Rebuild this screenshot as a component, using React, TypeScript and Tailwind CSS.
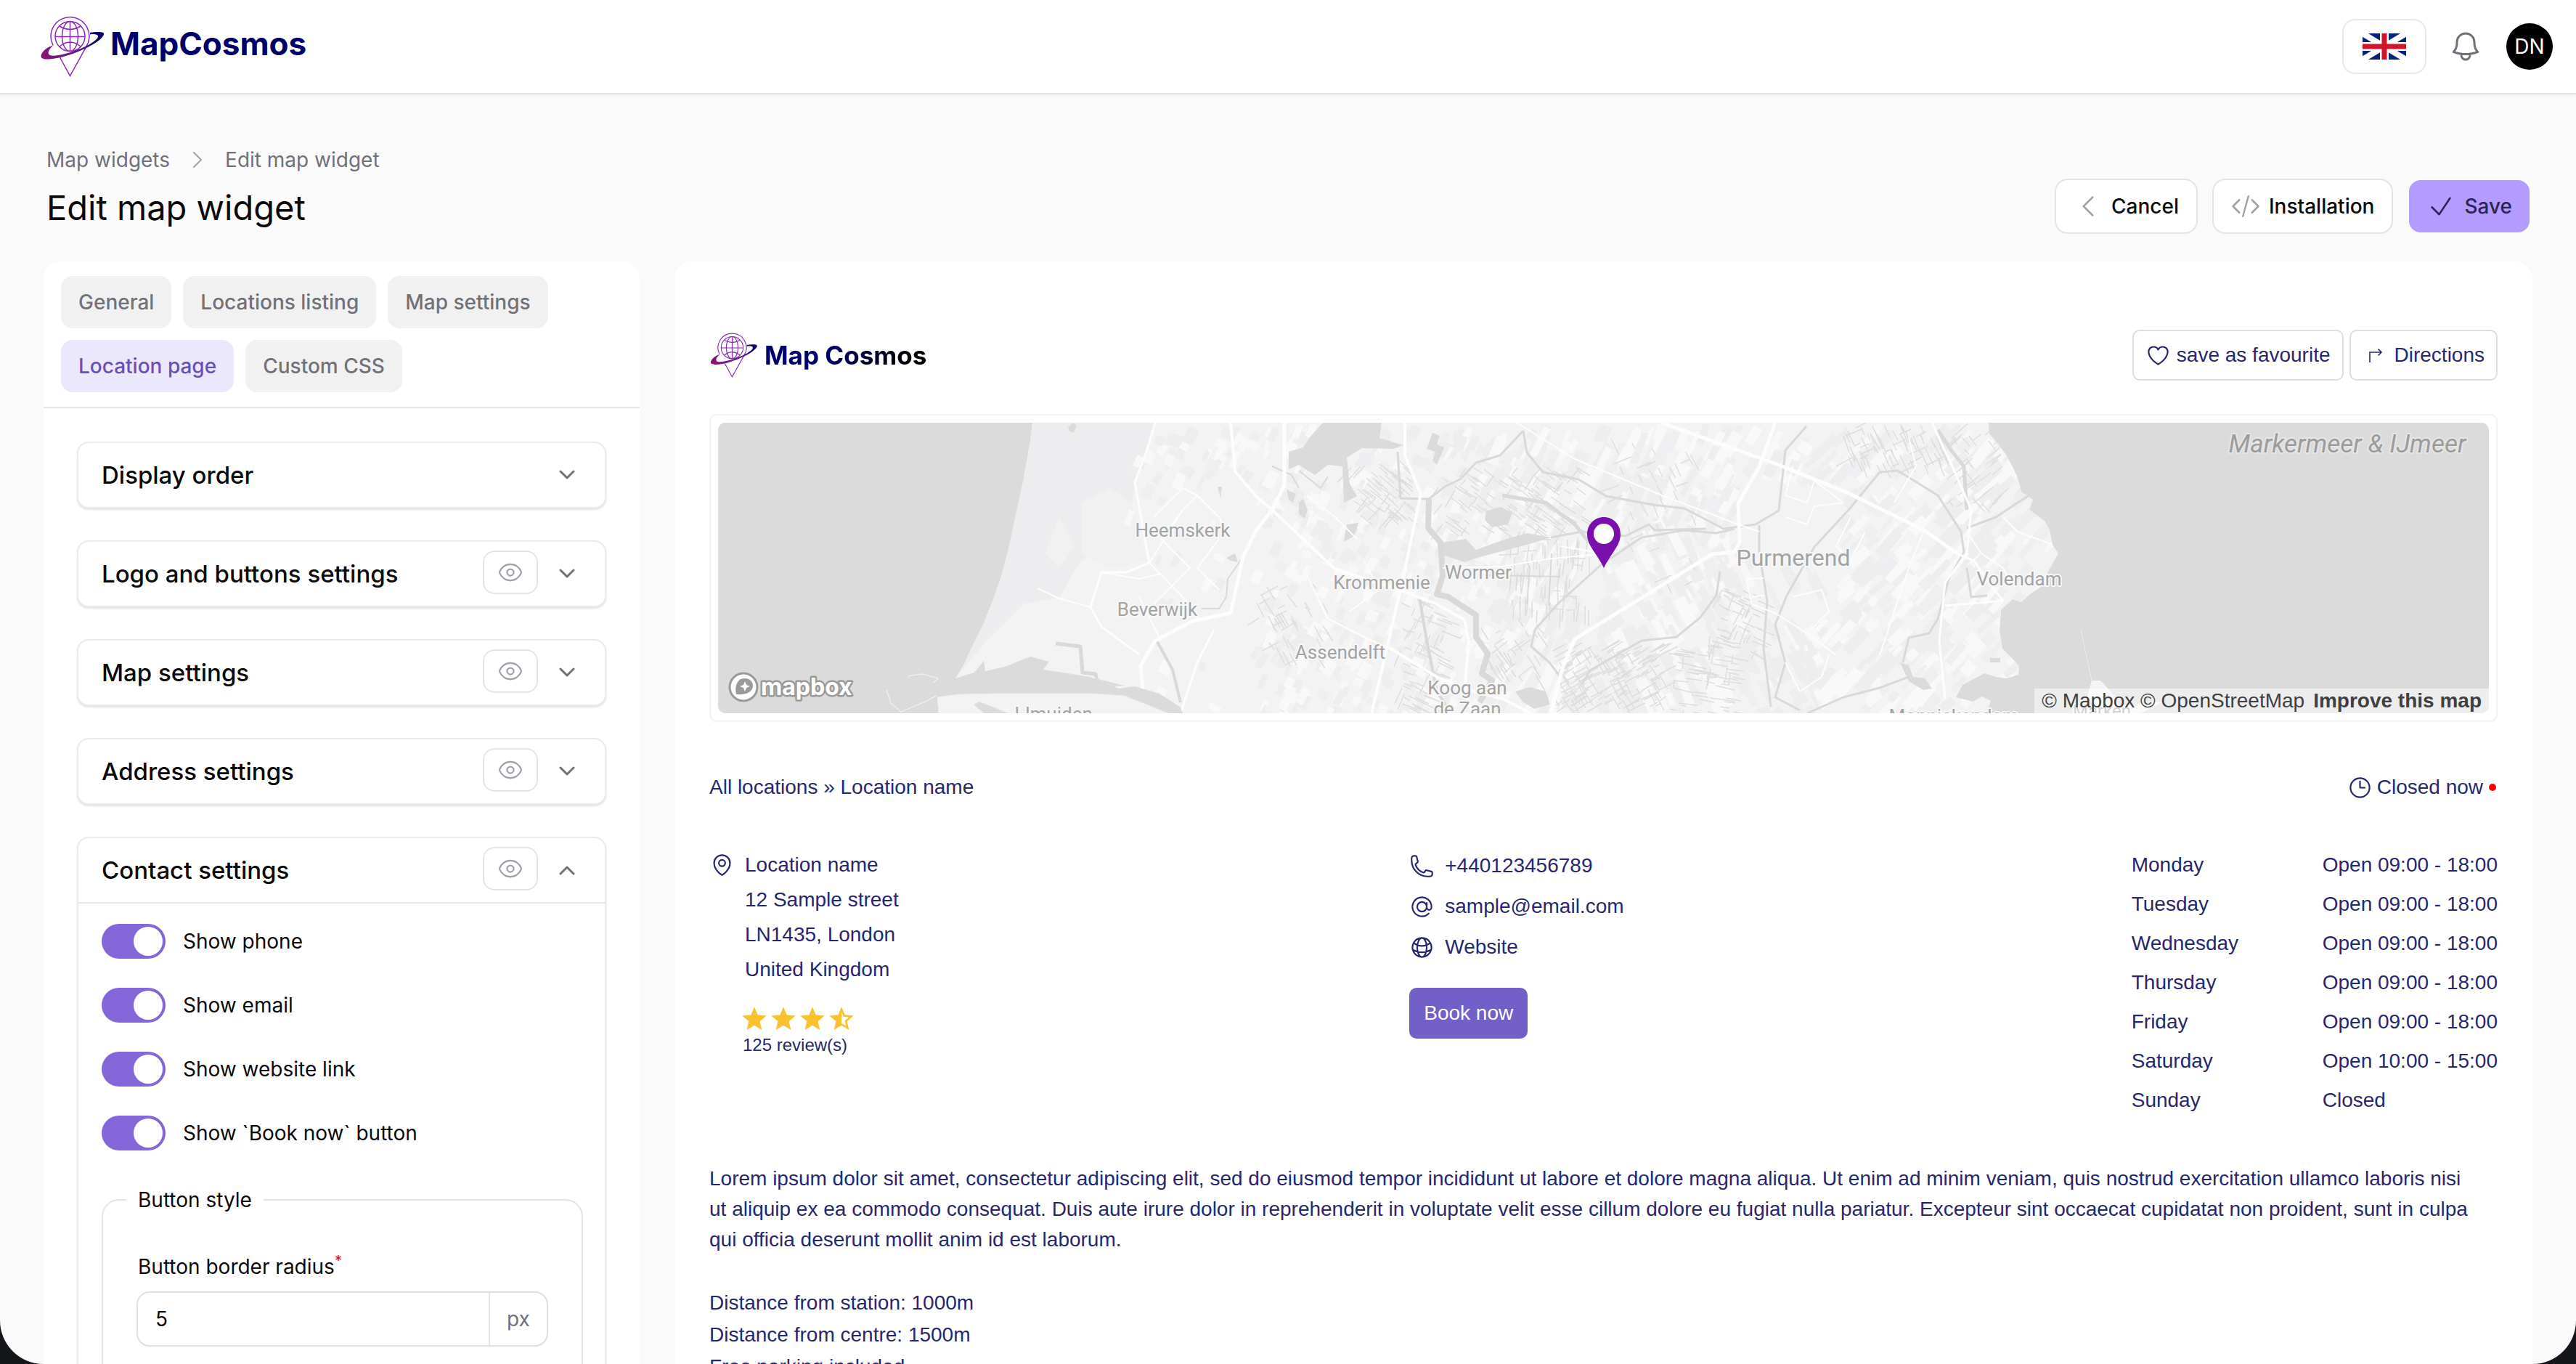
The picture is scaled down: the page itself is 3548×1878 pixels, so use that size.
import { useState } from "react";
import type { ReactNode } from "react";
import {
  HiOutlineAtSymbol,
  HiOutlineBell,
  HiOutlineCheck,
  HiOutlineChevronLeft,
  HiOutlineChevronRight,
  HiOutlineClock,
  HiOutlineCodeBracket,
  HiOutlineEye,
  HiOutlineGlobeAlt,
  HiOutlineHeart,
  HiOutlineMapPin,
  HiOutlinePhone,
} from "react-icons/hi2";

function CosmosMark({ className, id }: { className: string; id: string }) {
  return (
    <svg viewBox="0 0 88 84" className={className} fill="none" aria-hidden="true">
      <defs>
        <linearGradient id={id} x1="0" y1="50" x2="88" y2="22" gradientUnits="userSpaceOnUse">
          <stop offset="0" stopColor="#8a1572" />
          <stop offset="0.35" stopColor="#6d1c8c" />
          <stop offset="0.65" stopColor="#4a1080" />
          <stop offset="0.8" stopColor="#0a0768" />
        </linearGradient>
      </defs>
      <g stroke="#8b25bd" strokeWidth="1.5">
        <path d="M26.500 57 40.500 82.500 63 42A26.500 26.500 0 1 0 17 40.300" />
        <circle cx="40.500" cy="28" r="20.500" />
        <ellipse cx="40.500" cy="28" rx="11" ry="20.500" />
        <path d="M40.500 7.500v41M20 28.500h41M26 14q14.500 9 29 0M26 42q14.500-12 29 0" />
      </g>
      <path
        fill={`url(#${id})`}
        d="M68 23c8-1.500 18-1.500 19 1 1 4-8 12-22 19C45 53 25 59 11 59.500 3 60 .500 58 .500 55 1 50 8 43 17 40.500c-6 6-8 10-5 13 4 3 22 0 44-9 14-6 24-13 23-17-.5-2-5-3-11-2Z"
      />
    </svg>
  );
}

function FlagUK() {
  return (
    <svg viewBox="0 0 60 36" className="h-9 w-15" aria-hidden="true">
      <rect width="60" height="36" fill="#00247d" />
      <path d="M0 0 60 36M60 0 0 36" stroke="#fff" strokeWidth="8" />
      <path d="M30 0v36M0 18h60" stroke="#fff" strokeWidth="12" />
      <path d="M30 0v36M0 18h60" stroke="#cf142b" strokeWidth="7" />
    </svg>
  );
}

function Chevron({ up }: { up?: boolean }) {
  return (
    <svg viewBox="0 0 24 14" className="h-3.5 w-6" fill="none" stroke="#71717a" strokeWidth="3" strokeLinecap="round" strokeLinejoin="round" aria-hidden="true">
      <path d={up ? "M3 12 12 3l9 9" : "m3 2 9 9 9-9"} />
    </svg>
  );
}

function TurnArrow() {
  return (
    <svg viewBox="0 0 20 20" className="h-5 w-5" fill="none" stroke="#27276f" strokeWidth="1.6" aria-hidden="true">
      <path d="M2 20V6h16M13.500 1.500 18 6l-4.500 4.500" />
    </svg>
  );
}

function Star({ half }: { half?: boolean }) {
  return (
    <svg viewBox="0 0 24 24" className="h-10 w-10" fill="#fbc02d" aria-hidden="true">
      {half ? (
        <path d="m22 9.240-7.190-.62L12 2 9.190 8.630 2 9.240l5.460 4.730L5.820 21 12 17.270 18.180 21l-1.630-7.030L22 9.240ZM12 15.400V6.100l1.710 4.040 4.380.38-3.320 2.880 1 4.280L12 15.400Z" />
      ) : (
        <path d="M12 17.270 18.180 21l-1.640-7.030L22 9.240l-7.190-.61L12 2 9.190 8.630 2 9.240l5.460 4.730L5.820 21 12 17.270Z" />
      )}
    </svg>
  );
}

/* ---------- map ---------- */

const LAND =
  "M433 0 430 24 426 48 420 82 413 113 406 146 399 178 390 212 379 243 366 276 350 308 338 334 327 352 353 344 366 328 368 342 395 336 430 322 456 329 448 340 470 344 520 352 552 366 574 363 608 373 637 392 640 400 1747 400 1753 383 1741 377 1728 384 1705 378 1714 361 1744 345 1760 350 1774 352 1791 347 1792 335 1780 322 1769 311 1765 285 1767 258 1783 243 1795 247 1808 235 1823 225 1832 205 1846 180 1838 168 1834 148 1827 135 1806 120 1811 106 1795 95 1790 76 1783 61 1775 46 1762 28 1751 15 1750 0Z";
const SOUTH = "M302 378 330 374 380 373 516 373 560 376 590 388 620 400 400 400 360 384 352 388 366 400 304 400Z";

const WATER_AREAS = [
  "M833 0H914L911 21 944 31 930 36 887 35 866 48 870 84 880 101 862 110 860 60 840 58 822 72 800 58 786 64 786 40 806 34 815 20Z",
  "M998 165 1030 160 1044 175 1080 162 1114 152 1147 158 1114 168 1049 185 1028 192 998 182Z",
  "M1058 122 1078 116 1094 124 1088 140 1066 144 1056 134Z",
  "M783 92 796 98 792 110 786 106Z",
  "M800 110 806 104 812 120 808 132 800 126Z",
  "M866 140 882 138 876 156 862 164Z",
  "M984 14 994 18 990 30 1000 34 990 58 984 52 988 40 976 36Z",
  "M1098 370 1118 364 1140 370 1146 388 1124 394 1108 384Z",
  "M688 88 694 88 692 104Z",
  "M482 6 489 0 494 4 490 14 484 12Z",
  "M700 186 712 180 716 192 706 190Z",
  "M1628 330 1640 334 1646 350 1662 352 1672 366 1660 368 1640 356Z",
  "M1752 324h14v6h-14z",
];

const CANALS = [
  { d: "M979 105 978 145 995 165 998 211 990 236 1006 240 1044 265 1044 295 1060 318 1052 345 1066 355 1049 385", w: 8 },
  { d: "M1109 11 1114 41 1136 68 1185 78 1223 101 1288 113 1331 118 1385 146 1429 140 1461 121 1470 38 1499 5", w: 3 },
  { d: "M1109 11 1077 45 1044 55 1022 78 1001 88 979 105 940 104 936 40", w: 3 },
  { d: "M1125 285 1158 248 1217 195 1272 158 1331 148 1375 152 1400 146", w: 3 },
  { d: "M1434 141 1434 178 1445 245 1440 311 1450 391", w: 3 },
  { d: "M1600 68 1559 118 1510 171 1472 238 1456 278 1470 331 1456 378 1490 396", w: 3 },
  { d: "M1380 205 1375 238 1353 268 1320 295 1272 300 1201 341 1190 360", w: 3 },
  { d: "M1600 68 1625 66 1680 100 1712 150 1716 178 1695 215 1680 270 1668 290 1640 296 1632 330", w: 3 },
  { d: "M1640 350 1600 365 1550 378 1500 400", w: 3 },
  { d: "M1125 285 1120 308 1145 330 1160 350", w: 3 },
  { d: "M966 240 976 300 990 370 1010 400", w: 4 },
  { d: "M1147 158 1190 150 1250 156 1282 140 1290 148 1360 146", w: 3 },
  { d: "M1080 100 1140 110 1180 140 1200 165", w: 5 },
  { d: "M1114 250 1118 200 1114 190M1144 252 1148 180M1060 210 1160 212", w: 2 },
  { d: "M465 304 499 308 502 344 520 346 522 358", w: 5 },
  { d: "M604 300 626 340 637 385", w: 4 },
  { d: "M723 185 702 215 700 240 690 256 666 256", w: 2 },
  { d: "M763 60 790 72 800 90M800 66 830 90 840 74", w: 2 },
  { d: "M1680 10 1700 40 1716 60 1720 120", w: 5 },
  { d: "M1720 145 1760 130 1790 110 1806 100", w: 3 },
  { d: "M1720 200 1726 240 1748 238", w: 3 },
];

const ROADS = [
  { d: "M1299 0 1461 58 1559 98 1661 148 1708 181", w: 5 },
  { d: "M1456 0 1434 61 1405 111 1407 165 1400 178 1369 181 1290 230 1180 298 1163 338 1147 400", w: 5 },
  { d: "M706 0 712 67 740 100 763 120 811 165 849 201 941 231 990 250 1028 271 1034 300 1028 371 1040 400", w: 4 },
  { d: "M780 0 780 86 763 120 740 150 723 185 706 262 654 273 602 300 582 335 588 400", w: 5 },
  { d: "M602 0 590 40 574 82 594 193 562 206 528 206 513 254 528 281 580 319", w: 3 },
  { d: "M946 0 946 45 968 98 944 211 925 295 900 400", w: 4 },
  { d: "M683 285 660 330 637 400", w: 3 },
  { d: "M925 310 990 350 1040 370 1080 380 1120 400", w: 4 },
  { d: "M1672 0 1700 60 1726 120 1720 180 1690 220 1682 300 1690 380", w: 3 },
  { d: "M1708 181 1730 190 1750 220 1770 245 1690 252", w: 3 },
  { d: "M1720 150 1740 180 1770 200 1780 220M1770 130 1790 150 1838 168", w: 2 },
  { d: "M1100 0 1180 50 1300 100 1405 140 1434 150", w: 2 },
  { d: "M440 228 470 242 513 254M528 206 580 215 610 208M594 193 640 120 660 100 690 130 700 150", w: 2 },
  { d: "M594 193 640 240 662 270M640 120 610 160 650 200 600 250M660 100 640 90 600 130M580 240 610 300M690 160 660 200 690 230", w: 2 },
  { d: "M1416 215 1424 250 1456 262 1500 290 1540 320M1416 215 1440 214M1424 240 1440 238", w: 2 },
  { d: "M1480 60 1470 100 1500 110 1510 80 1550 110 1510 115 1500 140 1470 130M1560 130 1540 170 1560 190 1580 150", w: 2 },
  { d: "M1480 240 1520 230 1530 260 1500 290M1470 330 1490 370 1520 350 1530 320", w: 2 },
  { d: "M811 210 840 270 900 300 925 310M870 260 910 230 890 190M811 100 850 130 880 160", w: 2 },
  { d: "M373 373 400 360 520 352M400 382 460 378 600 396M1160 170 1220 180M998 200 1080 198 1140 188 1220 180", w: 2 },
  { d: "M1661 148 1640 200 1620 260 1600 320M1640 20 1650 60 1620 110", w: 2 },
];

function makeRandom(seed: number) {
  let s = seed;
  return () => {
    s = (s * 16807) % 2147483647;
    return s / 2147483647;
  };
}

const FIELDS = (() => {
  const rnd = makeRandom(4711);
  const tones = ["#f9f9f9", "#f8f8f9", "#efeff2", "#eeeef1", "#eeeeef"];
  return Array.from({ length: 1500 }, (_, key) => {
    const x = 560 + rnd() * 1290;
    const y = rnd() * 400;
    const inTown = (x < 740 && y > 70) || (x > 1400 && x < 1560 && y > 60 && y < 270);
    const long = x > 1060;
    return {
      key,
      x: Math.round(x),
      y: Math.round(y),
      w: Math.round(5 + rnd() * 12),
      h: Math.round((long ? 14 : 8) + rnd() * (long ? 34 : 16)),
      angle: Math.round((x > 1500 ? 38 : x > 1200 && y > 130 ? -32 : 20) + rnd() * 12),
      tone: tones[Math.floor(rnd() * tones.length)],
      hidden: inTown && rnd() > 0.12,
    };
  }).filter((f) => !f.hidden);
})();

const DITCH_ZONES = [
  { x: 990, y: 60, w: 200, h: 90, n: 120, a: 30 },
  { x: 1090, y: 150, w: 110, h: 110, n: 80, a: 88 },
  { x: 1150, y: 310, w: 150, h: 90, n: 170, a: -35 },
  { x: 940, y: 240, w: 60, h: 160, n: 70, a: 20 },
  { x: 870, y: 50, w: 80, h: 80, n: 60, a: 35 },
  { x: 1310, y: 290, w: 90, h: 110, n: 70, a: 5 },
  { x: 1375, y: 225, w: 60, h: 90, n: 50, a: 20 },
  { x: 1550, y: 0, w: 150, h: 60, n: 80, a: 60 },
  { x: 1225, y: 20, w: 120, h: 220, n: 40, a: 60 },
  { x: 1050, y: 270, w: 80, h: 80, n: 34, a: 50 },
  { x: 740, y: 220, w: 100, h: 110, n: 40, a: 55 },
  { x: 1690, y: 10, w: 70, h: 110, n: 40, a: -45 },
];

const DITCHES = (() => {
  const rnd = makeRandom(90210);
  return DITCH_ZONES.map((z) => {
    let d = "";
    for (let i = 0; i < z.n; i++) {
      const x = z.x + rnd() * z.w;
      const y = z.y + rnd() * z.h;
      const turn = rnd() > 0.75 ? 90 : 0;
      const a = ((z.a + turn + rnd() * 10) * Math.PI) / 180;
      const len = 8 + rnd() * 20;
      d += `M${x.toFixed(0)} ${y.toFixed(0)}l${(Math.cos(a) * len).toFixed(0)} ${(Math.sin(a) * len).toFixed(0)}`;
    }
    return d;
  });
})();

const PLACES = [
  { name: "Heemskerk", x: 640, y: 157, size: 26 },
  { name: "Beverwijk", x: 605, y: 266, size: 26 },
  { name: "Krommenie", x: 914, y: 229, size: 26 },
  { name: "Wormer", x: 1047, y: 215, size: 26 },
  { name: "Assendelft", x: 857, y: 325, size: 26 },
  { name: "Koog aan", x: 1032, y: 374, size: 26 },
  { name: "de Zaan", x: 1032, y: 403, size: 26 },
  { name: "Purmerend", x: 1481, y: 197, size: 32 },
  { name: "Volendam", x: 1792, y: 224, size: 26 },
  { name: "IJmuiden", x: 462, y: 410, size: 26 },
  { name: "Monnickendam", x: 1702, y: 413, size: 26 },
  { name: "Marken", x: 1906, y: 405, size: 24 },
];

function MapCanvas() {
  return (
    <svg
      viewBox="0 0 2439 400"
      preserveAspectRatio="xMidYMid slice"
      className="block h-[400px] w-full font-['Roboto',sans-serif]"
      role="img"
      aria-label="Map around Purmerend"
    >
      <defs>
        <clipPath id="land-clip">
          <path d={LAND} />
        </clipPath>
      </defs>
      <rect width="2439" height="400" fill="#dbdbdb" />
      <path d={SOUTH} fill="#f3f3f3" stroke="#ececec" />
      <path d={LAND} fill="#f3f3f3" />
      <g clipPath="url(#land-clip)">
        <path d="M433 0H602L574 82 570 110 540 170 500 190 470 240 420 250 370 300 327 352 379 243 413 113Z" fill="#ededf0" />
        <path d="M500 110 540 90 570 110 590 190 540 200 500 180ZM450 180 470 130 490 170 470 200Z" fill="#f1f1f2" />
        {FIELDS.map((f) => (
          <rect key={f.key} x={f.x} y={f.y} width={f.w} height={f.h} fill={f.tone} transform={`rotate(${f.angle} ${f.x} ${f.y})`} />
        ))}
        {DITCHES.map((d, i) => (
          <path key={i} d={d} stroke="#dedede" strokeWidth="1.5" fill="none" />
        ))}
        <g fill="#dbdbdb">
          {WATER_AREAS.map((d) => (
            <path key={d} d={d} />
          ))}
          <path d="M404 346 452 334 448 340 476 344 512 350 560 362 500 366 416 366 360 368Z" />
        </g>
        <g fill="none" strokeLinejoin="round">
          {CANALS.map((c) => (
            <path key={c.d} d={c.d} stroke="#d9d9d9" strokeWidth={c.w} />
          ))}
          {ROADS.map((r) => (
            <path key={r.d} d={r.d} stroke="#fdfdfd" strokeWidth={r.w} />
          ))}
        </g>
      </g>
      <path d="M1877 285 1892 355" stroke="#ececec" strokeWidth="1" />
      <path d="M1892 355 1904 355 1919 371 1930 390 1990 384 1960 400H1900L1886 376Z" fill="#f5f5f5" />
      <g fill="none" stroke="#ededed" strokeWidth="1.500">
        <path d="M262 352 264 348 282 346 303 352 296 358M232 368 238 386 252 398 286 384 300 376" />
      </g>
      <g fill="#a3a3a3" stroke="#f7f7f7" strokeWidth="4" strokeLinejoin="round" paintOrder="stroke" textAnchor="middle">
        {PLACES.map((p) => (
          <text key={p.name} x={p.x} y={p.y} fontSize={p.size}>
            {p.name}
          </text>
        ))}
        <text x="2244" y="41" fontSize="35" fontStyle="italic" fill="#9c9c9c" stroke="#e6e6e6">
          Markermeer &amp; IJmeer
        </text>
      </g>
      <path d="M1220 130c-13 0-23 10-23 24 0 15 14 27 23 46 9-19 23-31 23-46 0-14-10-24-23-24Z" fill="#7a10ac" />
      <circle cx="1220" cy="153" r="14" fill="#fff" />
      <circle cx="35" cy="364" r="19" fill="#fff" stroke="#9a9a9a" strokeWidth="3" />
      <path d="M25 374c-2-10 0-22 12-22 7 0 11 5 11 10 0 8-8 13-23 12Z" fill="#9a9a9a" />
      <path d="m37 356 2 5 5 2-5 2-2 5-2-5-5-2 5-2Z" fill="#fff" />
      <text x="59" y="375" fontSize="32" fontWeight="700" fill="#fff" stroke="#9a9a9a" strokeWidth="5" strokeLinejoin="round" paintOrder="stroke" className="font-['Inter',sans-serif]">
        mapbox
      </text>
    </svg>
  );
}

/* ---------- sidebar ---------- */

const TABS = ["General", "Locations listing", "Map settings", "Location page", "Custom CSS"];

function SettingsCard({ title, eye, open, children }: { title: string; eye?: boolean; open?: boolean; children?: ReactNode }) {
  return (
    <section className="rounded-2xl border-2 border-[#ebebec] bg-white shadow-[0_2px_3px_rgba(0,0,0,0.12)]">
      <div className={open ? "flex h-[90px] items-center border-b-2 border-[#e4e4e7] px-8" : "flex h-[88px] items-center px-8"}>
        <h2 className="flex-1 text-[33px] leading-10 font-medium text-[#0a0a0b]">{title}</h2>
        {eye && (
          <button type="button" aria-label={`Toggle visibility of ${title}`} className="mr-5 mb-1 flex h-15 w-19 items-center justify-center rounded-2xl border-2 border-[#e4e4e7] text-[#a1a1aa]">
            <HiOutlineEye className="h-9 w-9" />
          </button>
        )}
        <button type="button" aria-label={`${open ? "Collapse" : "Expand"} ${title}`} aria-expanded={!!open} className="flex h-10 w-10 items-center justify-center">
          <Chevron up={open} />
        </button>
      </div>
      {children}
    </section>
  );
}

function Toggle({ label }: { label: string }) {
  const [on, setOn] = useState(true);
  return (
    <label className="flex h-12 items-center gap-6 text-[28px] leading-10 text-[#0a0a0b]">
      <input
        type="checkbox"
        checked={on}
        onChange={() => setOn(!on)}
        className="flex h-12 w-[88px] appearance-none items-center rounded-full bg-zinc-300 p-1 before:h-10 before:w-10 before:rounded-full before:bg-white checked:justify-end checked:bg-[#8566d9]"
      />
      {label}
    </label>
  );
}

function Sidebar() {
  const [tab, setTab] = useState("Location page");
  return (
    <aside className="w-[821px] shrink-0 self-stretch overflow-hidden rounded-t-3xl bg-white">
      <nav className="flex flex-wrap gap-4 border-b-2 border-[#e4e4e7] px-6 py-5 text-[28px] font-medium">
        {TABS.map((t) => (
          <button
            key={t}
            type="button"
            onClick={() => setTab(t)}
            className={t === tab ? "h-18 rounded-2xl bg-[#ebe7fc] px-6 text-[#6b4fb8]" : "h-18 rounded-2xl bg-[#f1f1f1] px-6 text-[#71717a]"}
          >
            {t}
          </button>
        ))}
      </nav>
      <div className="flex flex-col gap-11 px-[46px] pt-[46px]">
        <SettingsCard title="Display order" />
        <SettingsCard title="Logo and buttons settings" eye />
        <SettingsCard title="Map settings" eye />
        <SettingsCard title="Address settings" eye />
        <SettingsCard title="Contact settings" eye open>
          <div className="px-8 pt-7 pb-10">
            <div className="flex flex-col gap-10">
              <Toggle label="Show phone" />
              <Toggle label="Show email" />
              <Toggle label="Show website link" />
              <Toggle label="Show `Book now` button" />
            </div>
            <fieldset className="mt-12 rounded-3xl border-2 border-[#e4e4e7] px-12 pt-13 pb-12 text-[28px] text-[#0a0a0b]">
              <legend className="-ml-4 px-4 leading-10">Button style</legend>
              <label htmlFor="radius" className="flex items-start leading-10">
                Button border radius
                <span className="text-xl leading-6 text-red-600">*</span>
              </label>
              <div className="mt-4 flex h-18 overflow-hidden rounded-2xl shadow-[0_2px_3px_rgba(0,0,0,0.08)] ring-2 ring-[#e0e0e2]">
                <input id="radius" defaultValue="5" className="min-w-0 flex-1 px-6 outline-none" />
                <span className="flex w-20 items-center justify-center border-l-2 border-[#e4e4e7] text-[#71717a]">px</span>
              </div>
            </fieldset>
          </div>
        </SettingsCard>
      </div>
    </aside>
  );
}

/* ---------- preview ---------- */

const HOURS = [
  ["Monday", "Open 09:00 - 18:00"],
  ["Tuesday", "Open 09:00 - 18:00"],
  ["Wednesday", "Open 09:00 - 18:00"],
  ["Thursday", "Open 09:00 - 18:00"],
  ["Friday", "Open 09:00 - 18:00"],
  ["Saturday", "Open 10:00 - 15:00"],
  ["Sunday", "Closed"],
];

function Preview() {
  return (
    <section className="min-w-0 flex-1 self-stretch rounded-t-3xl bg-white px-12 pt-[94px] font-['Liberation_Sans',Arial,sans-serif] text-[28px] text-[#27276f]">
      <div className="flex items-center justify-between">
        <div className="flex items-center gap-2">
          <CosmosMark id="ring-preview" className="h-[62px] w-[68px]" />
          <span className="bg-linear-to-r from-[#00006b] from-40% to-black bg-clip-text font-['Inter',sans-serif] text-[35px] leading-12 font-bold text-transparent">
            Map Cosmos
          </span>
        </div>
        <div className="flex gap-2">
          <button type="button" className="flex h-[70px] items-center gap-2 rounded-[10px] border-2 border-[#dddde6] px-4">
            <HiOutlineHeart className="h-[35px] w-[35px]" />
            save as favourite
          </button>
          <button type="button" className="flex h-[70px] items-center gap-4 rounded-[10px] border-2 border-[#dddde6] pr-4 pl-6">
            <TurnArrow />
            Directions
          </button>
        </div>
      </div>

      <div className="mt-[46px] rounded-[10px] border-2 border-[#f2f2f3] p-2.5">
        <div className="relative overflow-hidden rounded-[10px]">
          <MapCanvas />
          <div className="absolute right-0 bottom-0 flex h-[34px] items-center gap-3 bg-white/50 px-2.5 text-[#404040]">
            <span>
              <a href="#mapbox">© Mapbox</a> <a href="#osm">© OpenStreetMap</a>
            </span>
            <a href="#improve" className="font-bold">
              Improve this map
            </a>
          </div>
        </div>
      </div>

      <div className="mt-[69px] flex h-[42px] items-center justify-between">
        <p>
          <a href="#all">All locations</a> » Location name
        </p>
        <p className="flex items-center">
          <HiOutlineClock className="mr-1.5 h-[35px] w-[35px]" />
          Closed now
          <span className="mr-0.5 ml-2 h-2.5 w-2.5 rounded-full bg-[#ff0000]" />
        </p>
      </div>

      <div className="mt-[59px] grid grid-cols-[39.15%_1fr_auto]">
        <div className="pt-[3px]">
          <div className="flex items-start gap-3.5">
            <HiOutlineMapPin className="mt-1.5 h-[35px] w-[35px]" />
            <address className="leading-12 not-italic">
              Location name
              <br />
              12 Sample street
              <br />
              LN1435, London
              <br />
              United Kingdom
            </address>
          </div>
          <div className="mt-6 ml-[42px] flex" role="img" aria-label="3.5 out of 5 stars">
            <Star />
            <Star />
            <Star />
            <Star half />
          </div>
          <p className="ml-[46px] text-2xl leading-8">125 review(s)</p>
        </div>
        <div>
          <a href="tel:+440123456789" className="flex h-14 items-center gap-3.5">
            <HiOutlinePhone className="h-[35px] w-[35px]" />
            +440123456789
          </a>
          <a href="mailto:sample@email.com" className="flex h-14 items-center gap-3.5">
            <HiOutlineAtSymbol className="h-[35px] w-[35px]" />
            sample@email.com
          </a>
          <a href="#website" className="flex h-14 items-center gap-3.5">
            <HiOutlineGlobeAlt className="h-[35px] w-[35px]" />
            Website
          </a>
          <button type="button" className="mt-7 h-[70px] rounded-[10px] bg-[#735fc8] px-5 text-white">
            Book now
          </button>
        </div>
        <table className="text-left">
          <tbody>
            {HOURS.map(([day, time]) => (
              <tr key={day} className="h-[54px]">
                <th scope="row" className="w-[263px] p-0 font-normal">
                  {day}
                </th>
                <td className="p-0 whitespace-nowrap">{time}</td>
              </tr>
            ))}
          </tbody>
        </table>
      </div>

      <p className="mt-15 pr-8 leading-[42px]">
        Lorem ipsum dolor sit amet, consectetur adipiscing elit, sed do eiusmod tempor incididunt ut labore et dolore magna aliqua. Ut enim ad
        minim veniam, quis nostrud exercitation ullamco laboris nisi ut aliquip ex ea commodo consequat. Duis aute irure dolor in reprehenderit
        in voluptate velit esse cillum dolore eu fugiat nulla pariatur. Excepteur sint occaecat cupidatat non proident, sunt in culpa qui
        officia deserunt mollit anim id est laborum.
      </p>
      <div className="mt-11 leading-11">
        <p>Distance from station: 1000m</p>
        <p>Distance from centre: 1500m</p>
        <p>Free parking included</p>
      </div>
    </section>
  );
}

export default function App() {
  return (
    <div className="h-screen overflow-hidden bg-[#15161a]">
      <div className="flex h-full flex-col overflow-hidden rounded-b-[60px] bg-[#fafafa] font-['Inter',sans-serif]">
        <header className="z-10 flex h-[130px] shrink-0 items-center justify-between border-b-2 border-[#e4e4e7] bg-white pr-8 pl-14 shadow-[0_2px_4px_rgba(0,0,0,0.05)]">
          <a href="#home" className="flex items-center gap-2">
            <CosmosMark id="ring-header" className="h-[84px] w-[88px]" />
            <span className="pb-2 text-[44px] leading-14 font-bold text-[#00006b]">MapCosmos</span>
          </a>
          <div className="flex items-center">
            <button type="button" aria-label="Language: English" className="mr-[30px] flex h-19 w-29 items-center justify-center rounded-[18px] border-2 border-[#e8e8ea]">
              <FlagUK />
            </button>
            <button type="button" aria-label="Notifications" className="mr-8 text-[#71717a]">
              <HiOutlineBell className="h-12 w-12" />
            </button>
            <button type="button" aria-label="Account" className="h-16 w-16 rounded-full bg-black text-[28px] text-white">
              DN
            </button>
          </div>
        </header>

        <main className="flex min-h-0 flex-1 flex-col px-15 pt-[70px]">
          <div className="flex items-start justify-between px-1">
            <div>
              <nav aria-label="Breadcrumb" className="flex items-center text-[28px] leading-10 text-[#71717a]">
                <a href="#widgets">Map widgets</a>
                <HiOutlineChevronRight className="mx-[22px] h-8 w-8 text-[#a1a1aa]" />
                <a href="#edit">Edit map widget</a>
              </nav>
              <h1 className="mt-4 text-[47px] leading-[60px] text-[#0a0a0b]">Edit map widget</h1>
            </div>
            <div className="mt-12 flex gap-6 text-[28px] font-medium">
              <button type="button" className="flex h-18 items-center gap-3 rounded-2xl bg-white px-6 text-[#0a0a0b] ring-2 ring-[#e4e4e7]">
                <HiOutlineChevronLeft className="h-10 w-10 text-[#a1a1aa]" />
                Cancel
              </button>
              <button type="button" className="flex h-18 items-center gap-3 rounded-2xl bg-white px-6 text-[#0a0a0b] ring-2 ring-[#e4e4e7]">
                <HiOutlineCodeBracket className="h-10 w-10 text-[#a1a1aa]" />
                Installation
              </button>
              <button type="button" className="flex h-18 items-center gap-3 rounded-2xl bg-[#b49bff] px-6 text-[#2e2452]">
                <HiOutlineCheck className="h-10 w-10" />
                Save
              </button>
            </div>
          </div>
          <div className="mt-10 flex min-h-0 flex-1 gap-12">
            <Sidebar />
            <Preview />
          </div>
        </main>
      </div>
    </div>
  );
}
